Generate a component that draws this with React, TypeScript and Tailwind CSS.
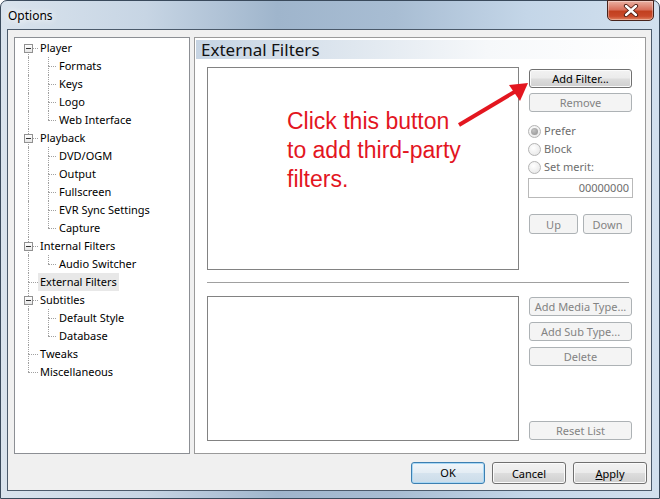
import React from "react";

type Node = { label: string; children?: string[]; selected?: boolean };

const tree: Node[] = [
  { label: "Player", children: ["Formats", "Keys", "Logo", "Web Interface"] },
  { label: "Playback", children: ["DVD/OGM", "Output", "Fullscreen", "EVR Sync Settings", "Capture"] },
  { label: "Internal Filters", children: ["Audio Switcher"] },
  { label: "External Filters", selected: true },
  { label: "Subtitles", children: ["Default Style", "Database"] },
  { label: "Tweaks" },
  { label: "Miscellaneous" },
];

const dot = "border-dotted border-[#a0a0a0]";

function ExpandBox() {
  return (
    <span className="absolute left-[6px] top-[5px] z-10 flex h-[9px] w-[9px] items-center justify-center border border-[#919191] bg-[linear-gradient(to_bottom,#ffffff,#e6e6e6)]">
      <span className="h-px w-[5px] bg-[#333]" />
    </span>
  );
}

function RootRow({ node, first, last }: { node: Node; first: boolean; last: boolean }) {
  return (
    <div className="flex h-[18px]">
      <div className="relative h-full w-[20px] shrink-0">
        {!first && <span className={`absolute left-[10px] top-0 h-[9px] border-l ${dot}`} />}
        {!last && <span className={`absolute left-[10px] top-[9px] bottom-0 border-l ${dot}`} />}
        <span className={`absolute left-[10px] right-0 top-[9px] border-t ${dot}`} />
        {node.children && <ExpandBox />}
      </div>
      <span className={`h-full px-[2px] leading-[18px] ${node.selected ? "bg-[#e8e8e8]" : ""}`}>{node.label}</span>
    </div>
  );
}

function ChildRow({ label, last }: { label: string; last: boolean }) {
  return (
    <div className="flex h-[18px]">
      <div className="relative h-full w-[20px] shrink-0">
        <span className={`absolute left-[10px] top-0 bottom-0 border-l ${dot}`} />
      </div>
      <div className="relative h-full w-[19px] shrink-0">
        <span className={`absolute left-[10px] top-0 h-[9px] border-l ${dot}`} />
        {!last && <span className={`absolute left-[10px] top-[9px] bottom-0 border-l ${dot}`} />}
        <span className={`absolute left-[10px] right-[1px] top-[9px] border-t ${dot}`} />
      </div>
      <span className="h-full px-[2px] leading-[18px]">{label}</span>
    </div>
  );
}

function Btn({ children, disabled, className = "" }: { children: React.ReactNode; disabled?: boolean; className?: string }) {
  const enabled =
    "border-[#707070] bg-[linear-gradient(to_bottom,#f2f2f2_0%,#ebebeb_48%,#dddddd_52%,#cfcfcf_100%)] text-black shadow-[inset_0_0_0_1px_#fbfbfb]";
  const dis = "border-[#adb2b5] bg-[#f4f4f4] text-[#838383]";
  return (
    <div
      className={`flex items-center justify-center rounded-[3px] border text-[11px] leading-none ${disabled ? dis : enabled} ${className}`}
    >
      {children}
    </div>
  );
}

function Radio({ label, checked }: { label: string; checked?: boolean }) {
  return (
    <div className="flex h-[18px] items-center">
      <span className="ml-[-1px] flex h-[13px] w-[13px] items-center justify-center rounded-full border border-[#b4b4b4] bg-[radial-gradient(circle_at_40%_35%,#ffffff,#e3e3e3)]">
        {checked && <span className="h-[7px] w-[7px] rounded-full bg-[radial-gradient(circle_at_40%_35%,#c4c4c4,#8e8e8e)]" />}
      </span>
      <span className="ml-[3px] text-[11px] text-[#6d6d6d]">{label}</span>
    </div>
  );
}

export default function App() {
  return (
    <div className="relative h-[499px] w-[660px] overflow-hidden bg-white font-['Noto_Sans',sans-serif]">
      <div className="flex h-[499px] w-[660px] flex-col rounded-t-[7px] border border-[#3a4a5c] bg-[linear-gradient(to_right,#d9e3ed_0%,#c7d5e4_22%,#9fb5cc_42%,#a8bdd3_60%,#c4d6e8_80%,#d2e0ee_100%)]">
        {/* Title bar */}
        <div className="flex h-[28px] shrink-0 items-start justify-between">
          <span className="ml-[7px] mt-[6px] text-[12px] text-black [text-shadow:0_0_6px_#ffffff,0_0_10px_#ffffff]">
            Options
          </span>
          <div className="mr-[5px] mt-[-1px] flex h-[21px] w-[47px] items-center justify-center rounded-b-[5px] border border-[#47231c] bg-[linear-gradient(to_bottom,#eab1a3_0%,#d8705c_45%,#c2401f_55%,#c9492a_80%,#e08461_100%)] shadow-[inset_0_0_0_1px_rgba(255,255,255,0.35)]">
            <svg width="16" height="13" viewBox="0 0 16 13">
              <path d="M3 2 L13 11 M13 2 L3 11" stroke="#4a1a10" strokeWidth="4.2" strokeLinecap="round" />
              <path d="M3 2 L13 11 M13 2 L3 11" stroke="#ffffff" strokeWidth="2.4" strokeLinecap="round" />
            </svg>
          </div>
        </div>

        {/* Client area */}
        <div className="ml-[6px] mr-[7px] flex h-[462px] shrink-0 flex-col border border-[#4b5a6b] bg-[#f0f0f0] pl-[6px] pt-[7px] text-[11px] text-black">
          <div className="flex h-[417px] gap-[4px]">
            {/* Tree */}
            <div className="h-[417px] w-[176px] shrink-0 border border-[#8c8f94] bg-white pl-[3px] pt-[1px]">
              {tree.map((n, i) => (
                <React.Fragment key={n.label}>
                  <RootRow node={n} first={i === 0} last={i === tree.length - 1} />
                  {n.children?.map((c, j) => (
                    <ChildRow key={c} label={c} last={j === n.children!.length - 1} />
                  ))}
                </React.Fragment>
              ))}
            </div>

            {/* Right panel */}
            <div className="flex h-[417px] w-[452px] shrink-0 flex-col border border-[#9a9a9a] bg-white">
              <div className="ml-[1px] mr-[1px] mt-[2px] flex h-[19px] items-center bg-[linear-gradient(to_right,#c6d4e3_0%,#dfe7ef_35%,#f6f8fa_65%,#ffffff_100%)] pl-[5px]">
                <span className="text-[17px] leading-none text-[#111]">External Filters</span>
              </div>

              <div className="mt-[8px] flex pl-[12px]">
                <div className="h-[203px] w-[312px] border border-[#828282] bg-white" />
                <div className="ml-[10px] flex w-[103px] flex-col">
                  <Btn className="mt-[2px] h-[19px]">Add Filter...</Btn>
                  <Btn disabled className="mt-[5px] h-[19px]">Remove</Btn>
                  <div className="mt-[10px] flex flex-col">
                    <Radio label="Prefer" checked />
                    <Radio label="Block" />
                    <Radio label="Set merit:" />
                  </div>
                  <div className="ml-[-1px] mt-[2px] flex h-[20px] w-[105px] items-center justify-end border border-[#b9b9b9] bg-white pr-[3px] text-[11px] text-[#6d6d6d]">
                    00000000
                  </div>
                  <div className="mt-[16px] flex justify-between">
                    <Btn disabled className="h-[20px] w-[49px]">Up</Btn>
                    <Btn disabled className="h-[20px] w-[49px]">Down</Btn>
                  </div>
                </div>
              </div>

              <div className="ml-[12px] mt-[12px] h-px w-[422px] bg-[#a0a0a0]" />

              <div className="mt-[13px] flex pl-[12px]">
                <div className="h-[145px] w-[312px] border border-[#828282] bg-white" />
                <div className="ml-[10px] flex h-[145px] w-[103px] flex-col">
                  <Btn disabled className="mt-[1px] h-[19px]">Add Media Type...</Btn>
                  <Btn disabled className="mt-[6px] h-[19px]">Add Sub Type...</Btn>
                  <Btn disabled className="mt-[6px] h-[19px]">Delete</Btn>
                  <Btn disabled className="mb-[1px] mt-auto h-[19px]">Reset List</Btn>
                </div>
              </div>
            </div>
          </div>

          {/* Bottom buttons */}
          <div className="mt-[8px] flex justify-end gap-[7px] pr-[4px]">
            <div className="flex h-[22px] w-[74px] items-center justify-center rounded-[3px] border border-[#3c7fb1] bg-[linear-gradient(to_bottom,#f1f6fa_0%,#e4edf4_48%,#d5e3ee_52%,#cbdce9_100%)] text-[11px] shadow-[inset_0_0_0_1px_#a9d8f5]">
              OK
            </div>
            <Btn className="h-[22px] w-[74px]">Cancel</Btn>
            <Btn className="h-[22px] w-[74px]">
              <span>
                <span className="underline">A</span>pply
              </span>
            </Btn>
          </div>
        </div>
      </div>

      {/* Annotation overlay */}
      <div className="absolute left-[287px] top-[107px] font-['Liberation_Sans',Arial,sans-serif] text-[23px] leading-[29px] text-[#e3161f]">
        <div>Click this button</div>
        <div>to add third-party</div>
        <div>filters.</div>
      </div>
      <svg className="absolute left-0 top-0" width="660" height="499" viewBox="0 0 660 499">
        <line x1="459" y1="125" x2="516" y2="91" stroke="#e3161f" strokeWidth="4" />
        <polygon points="528,83 509,85 520,101" fill="#e3161f" />
      </svg>
    </div>
  );
}
